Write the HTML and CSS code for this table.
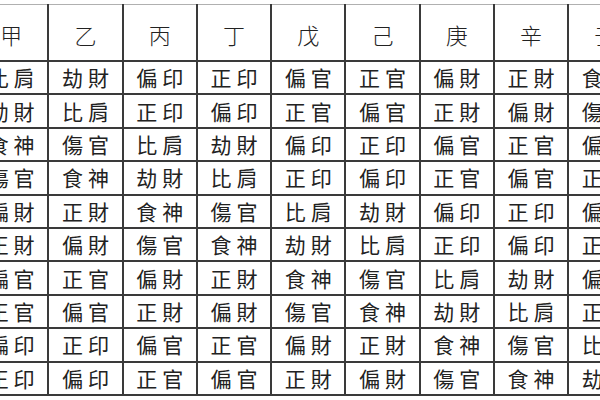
FILE: index.html
```html
<!DOCTYPE html>
<html lang="zh-Hant">
<head>
<meta charset="utf-8">
<title>十神表</title>
<link rel="stylesheet" href="styles.css">
</head>
<body>
<div class="frame">
<table class="gods">
<thead>
<tr class="head"><th>甲</th><th>乙</th><th>丙</th><th>丁</th><th>戊</th><th>己</th><th>庚</th><th>辛</th><th>壬</th></tr>
</thead>
<tbody>
<tr><td>比肩</td><td>劫財</td><td>偏印</td><td>正印</td><td>偏官</td><td>正官</td><td>偏財</td><td>正財</td><td>食神</td></tr>
<tr><td>劫財</td><td>比肩</td><td>正印</td><td>偏印</td><td>正官</td><td>偏官</td><td>正財</td><td>偏財</td><td>傷官</td></tr>
<tr><td>食神</td><td>傷官</td><td>比肩</td><td>劫財</td><td>偏印</td><td>正印</td><td>偏官</td><td>正官</td><td>偏財</td></tr>
<tr><td>傷官</td><td>食神</td><td>劫財</td><td>比肩</td><td>正印</td><td>偏印</td><td>正官</td><td>偏官</td><td>正財</td></tr>
<tr><td>偏財</td><td>正財</td><td>食神</td><td>傷官</td><td>比肩</td><td>劫財</td><td>偏印</td><td>正印</td><td>偏官</td></tr>
<tr><td>正財</td><td>偏財</td><td>傷官</td><td>食神</td><td>劫財</td><td>比肩</td><td>正印</td><td>偏印</td><td>正官</td></tr>
<tr><td>偏官</td><td>正官</td><td>偏財</td><td>正財</td><td>食神</td><td>傷官</td><td>比肩</td><td>劫財</td><td>偏印</td></tr>
<tr><td>正官</td><td>偏官</td><td>正財</td><td>偏財</td><td>傷官</td><td>食神</td><td>劫財</td><td>比肩</td><td>正印</td></tr>
<tr><td>偏印</td><td>正印</td><td>偏官</td><td>正官</td><td>偏財</td><td>正財</td><td>食神</td><td>傷官</td><td>比肩</td></tr>
<tr><td>正印</td><td>偏印</td><td>正官</td><td>偏官</td><td>正財</td><td>偏財</td><td>傷官</td><td>食神</td><td>劫財</td></tr>
</tbody>
</table>
</div>
</body>
</html>
```

FILE: styles.css
```css
html, body {
  margin: 0;
  padding: 0;
  background: #ffffff;
}
body {
  width: 600px;
  height: 400px;
  overflow: hidden;
  font-family: "Noto Sans CJK TC", "Noto Sans CJK SC", sans-serif;
  color: #222222;
}
.frame {
  padding-top: 4px;
  margin-left: -27px;
  width: 700px;
}
.gods {
  border-collapse: collapse;
  table-layout: fixed;
  width: 670.5px;
}
.gods th,
.gods td {
  padding: 0;
  border: 2px solid #3a3a3a;
  text-align: center;
  vertical-align: middle;
  white-space: nowrap;
  overflow: hidden;
}
.gods thead th {
  border-top: 1px solid #b0b0b0;
  height: 52px;
  font-size: 22px;
  font-weight: 300;
  line-height: 1;
  padding-top: 3px;
}
.gods td {
  height: 31.4px;
  font-size: 21px;
  font-weight: 400;
  line-height: 1;
  letter-spacing: 5px;
  text-indent: 5px;
}
```
